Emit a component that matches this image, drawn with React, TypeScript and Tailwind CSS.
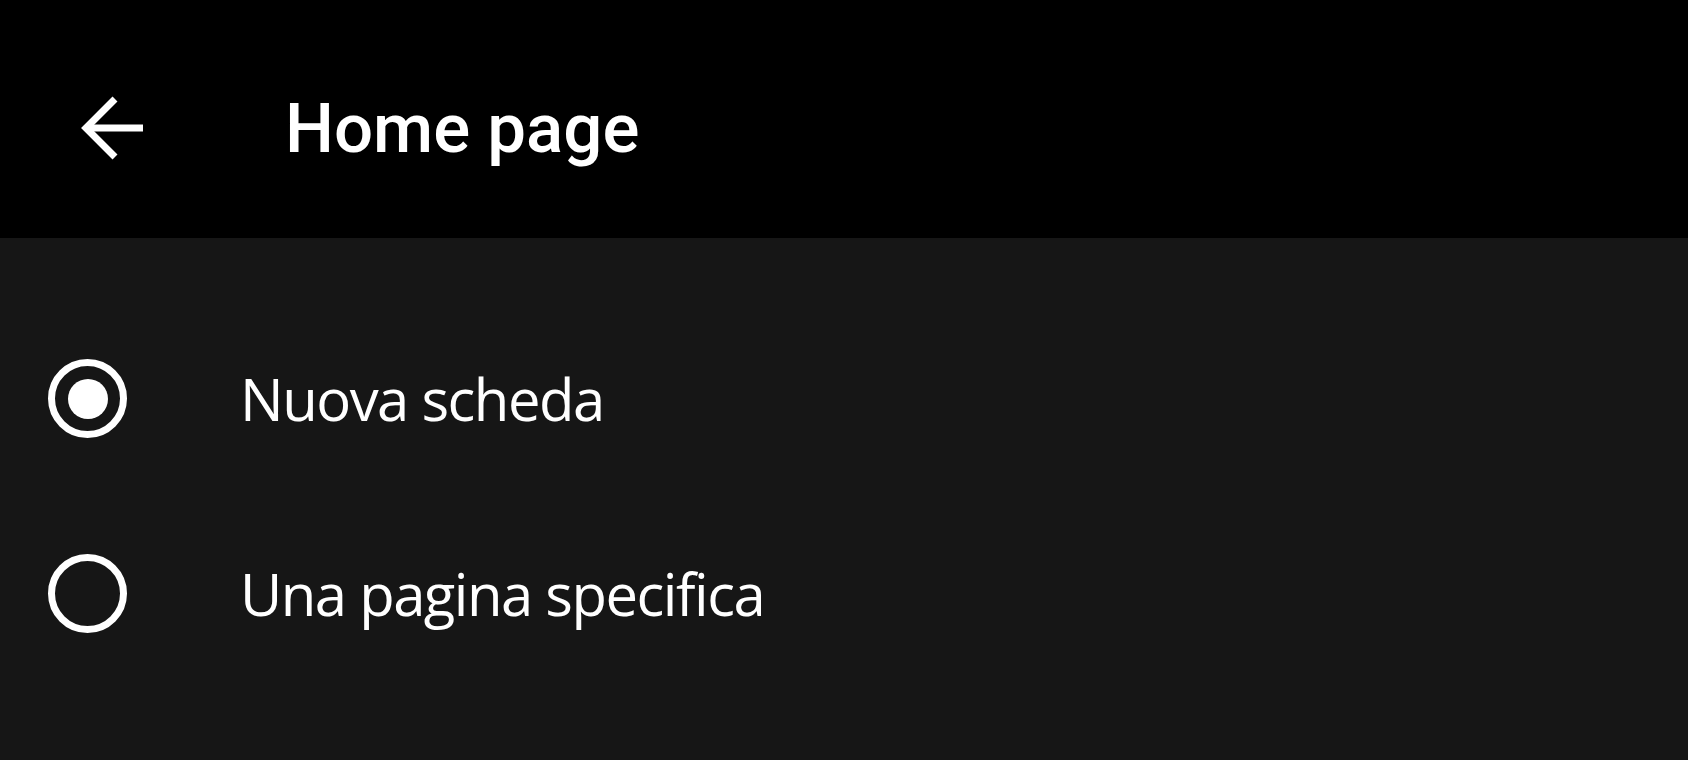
import { useState } from "react"

const options = ["Nuova scheda", "Una pagina specifica"]

function BackArrow() {
  return (
    <svg width="64" height="64" viewBox="0 0 64 64" fill="none" stroke="white" strokeWidth="7">
      <path d="M6 32 H63" />
      <path d="M35 3 L6 32 L35 61" strokeLinejoin="miter" />
    </svg>
  )
}

function Radio({ checked }: { checked: boolean }) {
  return (
    <span className="flex h-[79px] w-[79px] shrink-0 items-center justify-center rounded-full border-[7px] border-white">
      {checked && <span className="h-[40px] w-[40px] rounded-full bg-white" />}
    </span>
  )
}

export default function App() {
  const [selected, setSelected] = useState(0)

  return (
    <div className="flex h-[760px] w-full flex-col bg-[#161616]">
      {/* Header */}
      <header className="flex h-[238px] shrink-0 items-center bg-black pt-[18px]">
        <button className="ml-[80px] flex h-[64px] w-[64px] items-center justify-center">
          <BackArrow />
        </button>
        <h1 className="ml-[141px] font-['Roboto',sans-serif] text-[69px] font-medium leading-none text-white">
          Home page
        </h1>
      </header>

      {/* Options */}
      <div className="flex flex-col pt-[63px]">
        {options.map((label, i) => (
          <button
            key={label}
            onClick={() => setSelected(i)}
            className="flex h-[195px] items-center pl-[48px] text-left"
          >
            <Radio checked={selected === i} />
            <span className="ml-[113px] font-['Open_Sans',sans-serif] text-[58px] leading-none tracking-[-1.5px] text-white">
              {label}
            </span>
          </button>
        ))}
      </div>
    </div>
  )
}
